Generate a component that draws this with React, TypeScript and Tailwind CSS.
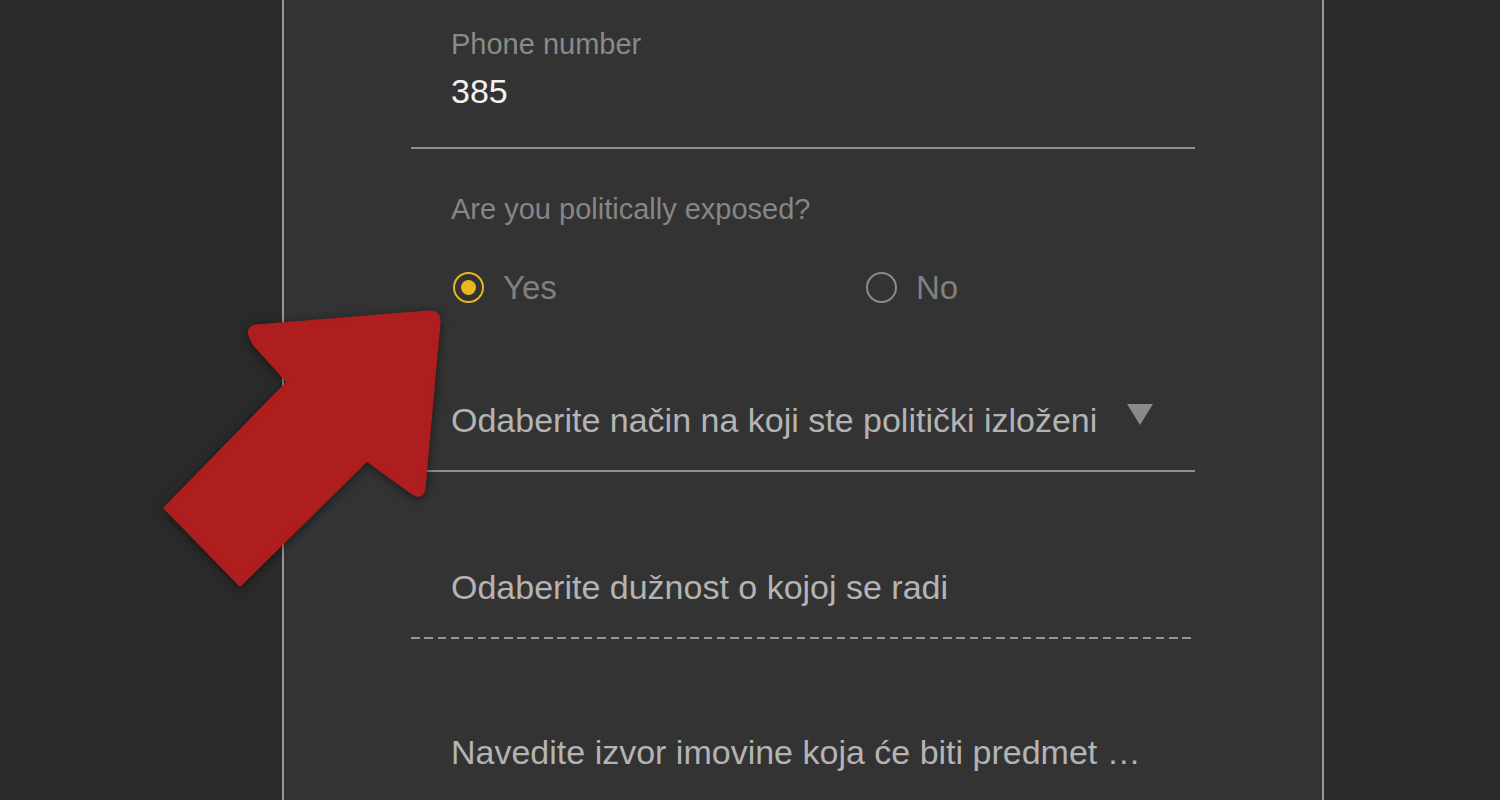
import React from 'react';

const Radio = ({ label, checked }: { label: string; checked?: boolean }) => (
  <label className="flex items-center gap-[19px]">
    <span
      className={
        checked
          ? 'flex h-[31px] w-[31px] items-center justify-center rounded-full border-[2.5px] border-[#e6b823]'
          : 'flex h-[31px] w-[31px] items-center justify-center rounded-full border-[2.5px] border-[#8a8a8a]'
      }
    >
      {checked && <span className="h-[15px] w-[15px] rounded-full bg-[#e6b823]" />}
    </span>
    <span className="text-[33px] leading-none text-[#808080]">{label}</span>
  </label>
);

const Arrow = () => (
  <svg
    className="pointer-events-none absolute left-0 top-0 h-[800px] w-[1500px] drop-shadow-[0_2px_5px_rgba(0,0,0,0.5)]"
    viewBox="0 0 1500 800"
  >
    <path
      d="M256 326 L428 312 Q440 311 439 323 L424 488 Q422 500 411 492 L367 460 L240 585 L165 508 L288 382 L254 344 Q244 328 256 326 Z"
      fill="#ae1e1e"
      stroke="#ae1e1e"
      strokeWidth="3"
      strokeLinejoin="round"
    />
  </svg>
);

export default function App() {
  return (
    <div className="relative flex h-[800px] w-[1500px] overflow-hidden bg-[#2a2a2a] font-['Liberation_Sans',Arial,sans-serif]">
      <div className="w-[282px] shrink-0" />
      <div className="h-full w-[1042px] shrink-0 border-x-2 border-[#979797] bg-[#333333] pl-[127px]">
        <form className="w-[784px] pt-[30px]">
          <div className="pl-10">
            <div className="text-[29px] leading-none text-[#8a8a8a]">Phone number</div>
            <div className="mt-[15px] text-[34px] leading-none text-[#f2f2f2]">385</div>
          </div>
          <div className="mt-[39px] h-[2px] bg-[#8e8e8e]" />

          <div className="pl-10 pt-[46px]">
            <div className="text-[29px] leading-none text-[#868686]">Are you politically exposed?</div>
            <div className="mt-[47px] flex pl-[2px]">
              <div className="w-[413px]">
                <Radio label="Yes" checked />
              </div>
              <Radio label="No" />
            </div>
          </div>

          <div className="mt-[99px] flex items-start justify-between pl-10 pr-[42px]">
            <span className="text-[34px] leading-none text-[#b4b4b4]">
              Odaberite način na koji ste politički izloženi
            </span>
            <svg width="26" height="21" viewBox="0 0 26 21" className="mt-[1px]">
              <polygon points="0,0 26,0 13,21" fill="#8a8a8a" />
            </svg>
          </div>
          <div className="mt-[33px] h-[2px] bg-[#8e8e8e]" />

          <div className="mt-[98px] pl-10 text-[34px] leading-none text-[#b4b4b4]">
            Odaberite dužnost o kojoj se radi
          </div>
          <div className="mt-[33px] h-[2px] bg-[repeating-linear-gradient(90deg,#969696_0_8.5px,transparent_8.5px_13.3px)]" />

          <div className="mt-[96px] pl-10 text-[34px] leading-none text-[#b4b4b4]">
            Navedite izvor imovine koja će biti predmet …
          </div>
        </form>
      </div>
      <div className="flex-1 bg-[#2b2b2b]" />
      <Arrow />
    </div>
  );
}
